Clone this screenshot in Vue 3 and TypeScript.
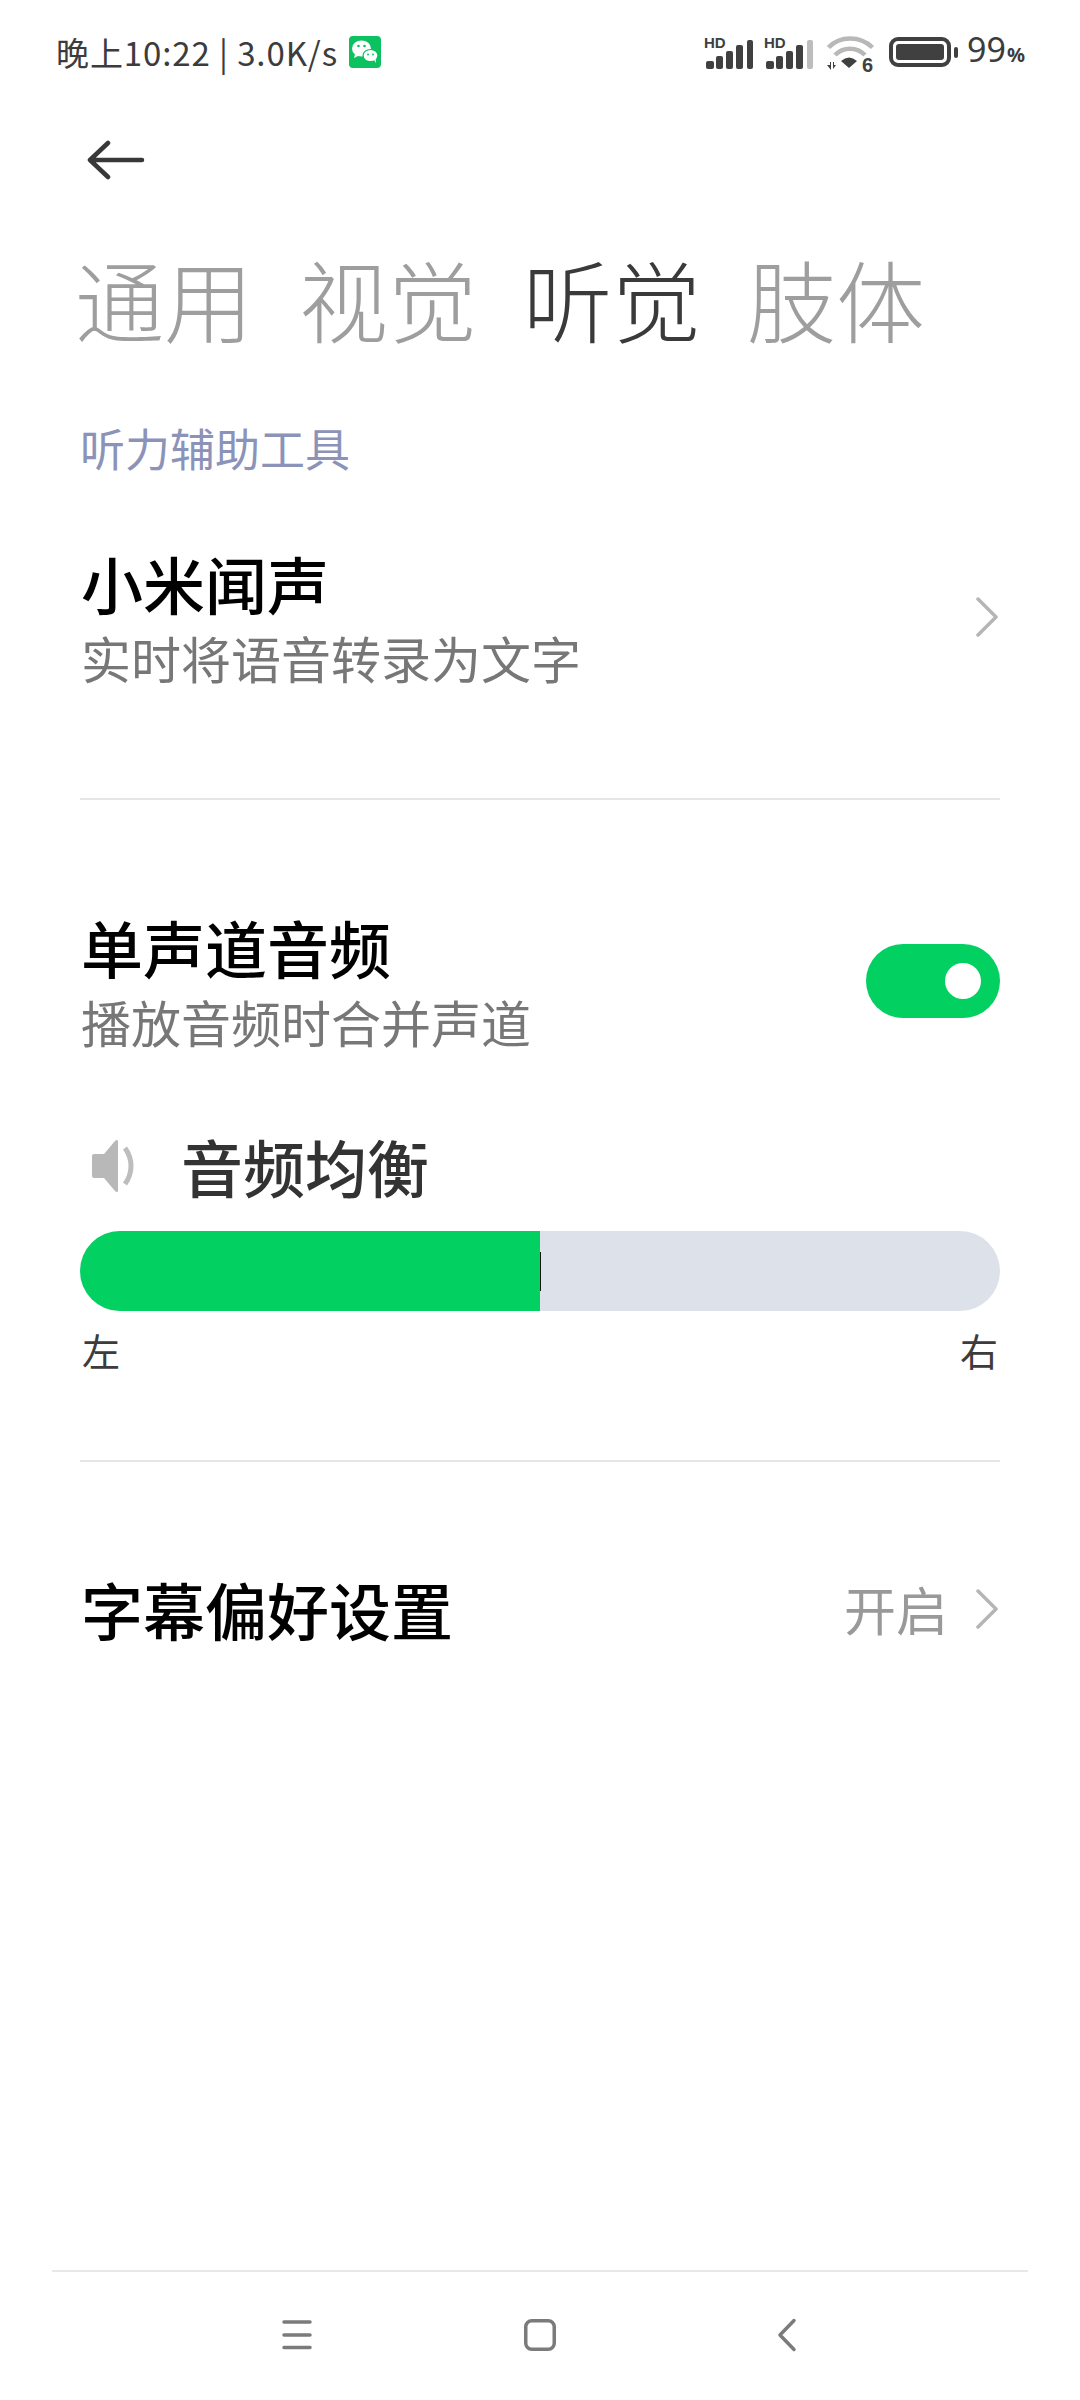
<script setup lang="ts">
const tabs = [
  { label: '通用', active: false },
  { label: '视觉', active: false },
  { label: '听觉', active: true },
  { label: '肢体', active: false },
]
const signalBars = [
  { x: 2, h: 8, w: 8 },
  { x: 12, h: 13, w: 7 },
  { x: 22, h: 18, w: 7 },
  { x: 32, h: 24, w: 7 },
  { x: 43, h: 29, w: 6 },
]
</script>

<template>
  <div class="page">
    <header class="status">
      <div class="status-left">
        <span class="status-text">晚上10:22 | 3.0K/s</span>
        <svg class="wechat" viewBox="0 0 32 32" width="32" height="32">
          <rect width="32" height="32" rx="4" fill="#0bc160" />
          <ellipse cx="12.5" cy="12.5" rx="9.5" ry="8" fill="#fff" />
          <path d="M6 18l-1 4 5-2.5z" fill="#fff" />
          <ellipse cx="21.5" cy="19.5" rx="8" ry="6.6" fill="#0bc160" />
          <ellipse cx="21.5" cy="19.5" rx="6.8" ry="5.6" fill="#fff" />
          <path d="M25 24l2 3-.5-4.500z" fill="#fff" />
          <circle cx="9.500" cy="10" r="1.300" fill="#0bc160" />
          <circle cx="15.500" cy="10" r="1.300" fill="#0bc160" />
          <circle cx="19" cy="18.500" r="1" fill="#0bc160" />
          <circle cx="24" cy="18.500" r="1" fill="#0bc160" />
        </svg>
      </div>
      <div class="status-right">
        <svg class="signal" viewBox="0 0 50 32" width="50" height="32">
          <text x="0" y="11" class="hd">HD</text>
          <rect v-for="b in signalBars" :key="b.x" :x="b.x" :y="32 - b.h" :width="b.w" :height="b.h" rx="2" fill="#404040" />
        </svg>
        <svg class="signal second-signal" viewBox="0 0 50 32" width="50" height="32">
          <text x="0" y="11" class="hd">HD</text>
          <rect v-for="(b, i) in signalBars" :key="b.x" :x="b.x" :y="32 - b.h" :width="b.w" :height="b.h" rx="2" :fill="i === 4 ? '#bdbdbd' : '#404040'" />
        </svg>
        <svg class="wifi" viewBox="0 0 48 38" width="48" height="38">
          <path d="M1.500 13.500C13 1.500 33 1.500 45.500 13.500" fill="none" stroke="#b8b8b8" stroke-width="4.500" />
          <path d="M8 21C16 12.500 30 12.500 38 21" fill="none" stroke="#b8b8b8" stroke-width="4.500" />
          <path d="M14 27q8-7 16 0l-8 7z" fill="#404040" />
          <path d="M0 31h3v-3l1 0v8zM6 28l1 0v3h2l-3 4z" fill="#404040" />
          <text x="35" y="38" class="six">6</text>
        </svg>
        <div class="battery">
          <div class="battery-body"><div class="battery-fill"></div></div>
          <div class="battery-nub"></div>
        </div>
        <span class="percent">99<small>%</small></span>
      </div>
    </header>

    <div class="back-row">
      <svg viewBox="0 0 58 40" width="58" height="40">
        <path d="M3 20h52M21 3L3 20l18 17" fill="none" stroke="#383838" stroke-width="4.500" stroke-linecap="round" stroke-linejoin="round" />
      </svg>
    </div>

    <nav class="tabs">
      <span v-for="t in tabs" :key="t.label" class="tab" :class="{ active: t.active }">{{ t.label }}</span>
    </nav>

    <div class="section-label">听力辅助工具</div>

    <section class="item first">
      <div class="item-text">
        <div class="title">小米闻声</div>
        <div class="sub">实时将语音转录为文字</div>
      </div>
      <svg class="chev chev-mid" viewBox="0 0 22 40" width="22" height="40">
        <path d="M2 2l18 18L2 38" fill="none" stroke="#b5b5b5" stroke-width="3.500" stroke-linecap="round" stroke-linejoin="round" />
      </svg>
    </section>

    <div class="divider"></div>

    <section class="item mono">
      <div class="item-text">
        <div class="title">单声道音频</div>
        <div class="sub">播放音频时合并声道</div>
      </div>
      <div class="switch"><div class="knob"></div></div>
    </section>

    <div class="eq-head">
      <svg class="speaker" viewBox="0 0 48 54" width="48" height="54">
        <path d="M5 15h10L26 2q2-2 3 0v50q-1 2-3 0L15 39H5q-2 0-2-2V17q0-2 2-2z" fill="#b8b8b8" />
        <path d="M36 9c8 11 8 25 0 36" fill="none" stroke="#bdbdbd" stroke-width="5" />
      </svg>
      <span class="eq-title">音频均衡</span>
    </div>

    <div class="bar">
      <div class="bar-fill"></div>
      <div class="bar-mark"></div>
    </div>
    <div class="bar-labels"><span>左</span><span>右</span></div>

    <div class="divider second"></div>

    <section class="item caption">
      <div class="title">字幕偏好设置</div>
      <div class="value">
        <span>开启</span>
        <svg viewBox="0 0 22 40" width="22" height="40">
          <path d="M2 2l18 18L2 38" fill="none" stroke="#b5b5b5" stroke-width="3.500" stroke-linecap="round" stroke-linejoin="round" />
        </svg>
      </div>
    </section>

    <footer class="navbar">
      <svg viewBox="0 0 30 36" width="30" height="36">
        <path d="M2 5h26M2 18h26M2 30.500h26" stroke="#7b7b7b" stroke-width="3.500" stroke-linecap="round" />
      </svg>
      <svg viewBox="0 0 32 36" width="32" height="36">
        <rect x="1.750" y="3.750" width="28.500" height="28.500" rx="6" fill="none" stroke="#7b7b7b" stroke-width="3.500" />
      </svg>
      <svg class="nav-back" viewBox="0 0 20 36" width="20" height="36">
        <path d="M17 3.500L3 18l14 14.500" fill="none" stroke="#7b7b7b" stroke-width="3.500" stroke-linecap="round" stroke-linejoin="round" />
      </svg>
    </footer>
  </div>
</template>

<style>
html, body { margin: 0; background: #fff; }
</style>

<style scoped>
.page {
  width: 1080px;
  height: 2400px;
  background: #fff;
  display: flex;
  flex-direction: column;
  font-family: "Noto Sans CJK SC", "Noto Sans", sans-serif;
  overflow: hidden;
}
.status {
  height: 104px;
  padding: 0 55px 0 56px;
  box-sizing: border-box;
  display: flex;
  align-items: center;
  justify-content: space-between;
}
.status-left { display: flex; align-items: center; gap: 11px; }
.status-text { font-size: 33px; color: #3c3c3c; line-height: 40px; letter-spacing: 0.9px; white-space: nowrap; }
.wechat { display: block; }
.status-right { display: flex; align-items: center; }
.signal { display: block; overflow: visible; margin-top: 1px; }
.second-signal { margin-left: 10px; }
.hd { font: 700 15px "Liberation Sans", sans-serif; fill: #404040; }
.six { font: 700 20px "Liberation Sans", sans-serif; fill: #404040; }
.wifi { margin: 2px 14px 0 13px; display: block; overflow: visible; }
.battery { display: flex; align-items: center; gap: 3px; margin-right: 9px; }
.battery-body {
  width: 62px;
  height: 30px;
  box-sizing: border-box;
  border: 4px solid #404040;
  border-radius: 9px;
  padding: 3px;
}
.battery-fill { height: 100%; background: #404040; border-radius: 3px; }
.battery-nub { width: 4px; height: 11px; background: #404040; border-radius: 2px; }
.percent { font: 400 34px/40px "Noto Sans", sans-serif; color: #3c3c3c; }
.percent small { font-size: 20px; font-weight: 700; margin-left: 1px; }

.back-row { height: 112px; padding-left: 87px; display: flex; align-items: center; }
.tabs { height: 172px; padding: 0 0 8px 75px; box-sizing: border-box; display: flex; align-items: center; gap: 46px; }
.tab { font-size: 89px; line-height: 100px; font-weight: 300; color: #9e9e9e; white-space: nowrap; }
.tab.active { color: #3a3a3a; }
.section-label {
  height: 120px;
  line-height: 120px;
  margin-bottom: 2px;
  padding-left: 80px;
  font-size: 45px;
  color: #8c93b8;
}
.item { margin: 0 80px; display: flex; justify-content: space-between; }
.first { height: 288px; padding-top: 35px; box-sizing: border-box; }
.mono { padding-top: 109px; align-items: center; }
.caption { padding-top: 109px; align-items: center; }
.title { font-size: 62px; line-height: 76px; font-weight: 500; color: #000; padding-left: 1px; white-space: nowrap; }
.sub { font-size: 50px; line-height: 76px; margin-top: -2px; color: #777; padding-left: 1px; white-space: nowrap; }
.chev-mid { margin: 52px 2px 0 0; }
.divider { height: 2px; margin: 0 80px; background: #e6e6e6; flex: none; }
.switch {
  width: 134px;
  height: 74px;
  margin-top: -7px;
  border-radius: 37px;
  background: #02d162;
  position: relative;
}
.knob {
  position: absolute;
  right: 19px;
  top: 19px;
  width: 36px;
  height: 36px;
  border-radius: 50%;
  background: #fff;
}
.eq-head { margin: 69px 80px 0 89px; height: 76px; display: flex; align-items: center; gap: 44px; }
.speaker { display: block; }
.eq-title { font-size: 62px; line-height: 76px; font-weight: 500; color: #333; white-space: nowrap; }
.bar {
  margin: 27px 80px 0;
  height: 80px;
  border-radius: 40px;
  background: #dde1e9;
  position: relative;
  overflow: hidden;
  flex: none;
}
.bar-fill { width: 460px; height: 100%; background: #02d162; }
.bar-mark { position: absolute; left: 460px; top: 21px; width: 1px; height: 39px; background: #111; }
.bar-labels {
  margin: 14px 80px 0;
  display: flex;
  justify-content: space-between;
  font-size: 38px;
  line-height: 50px;
  color: #3c3c3c;
  padding: 0 2px;
}
.divider.second { margin-top: 85px; }
.value { display: flex; align-items: center; gap: 28px; font-size: 52px; line-height: 76px; color: #999; padding-right: 2px; }
.value svg { display: block; }
.navbar {
  margin: auto 52px 0;
  height: 130px;
  border-top: 2px solid #e8e8e8;
  box-sizing: border-box;
  display: flex;
  align-items: flex-start;
  padding: 45px 0 0 230px;
  gap: 212px;
}
.navbar svg { display: block; }
.navbar .nav-back { margin-left: 9px; }
</style>
